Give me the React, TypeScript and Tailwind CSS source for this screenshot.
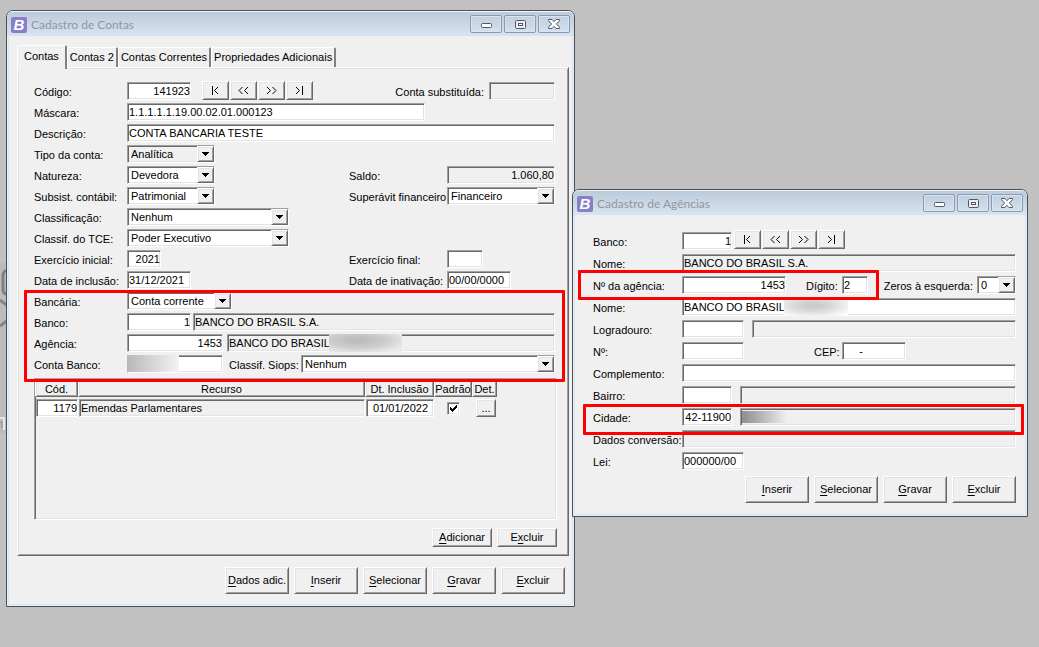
import { useState } from "react";
import type { ReactNode } from "react";
import clsx from "clsx";

const sunken =
  "border border-t-[#a0a0a0] border-l-[#a0a0a0] border-b-white border-r-white shadow-[inset_1px_1px_0_#696969,inset_-1px_-1px_0_#e3e3e3]";
const raised =
  "border border-t-white border-l-white border-b-[#696969] border-r-[#696969] shadow-[inset_1px_1px_0_#e3e3e3,inset_-1px_-1px_0_#a0a0a0]";

type LabelProps = { htmlFor?: string; className?: string; children: ReactNode };

function Label({ htmlFor, className, children }: LabelProps) {
  return (
    <label htmlFor={htmlFor} className={clsx("shrink-0 whitespace-nowrap pt-[3px] leading-[15px]", className)}>
      {children}
    </label>
  );
}

type FieldProps = {
  id?: string;
  label?: string;
  value?: string;
  readOnly?: boolean;
  right?: boolean;
  className?: string;
};

function Field({ id, label, value = "", readOnly, right, className }: FieldProps) {
  const [text, setText] = useState(value);
  return (
    <input
      id={id}
      aria-label={label}
      type="text"
      value={text}
      readOnly={readOnly}
      onChange={(e) => setText(e.target.value)}
      className={clsx(
        "block h-[18px] min-w-0 pb-[1px] pl-[1px] leading-[15px] outline-none",
        sunken,
        readOnly ? "bg-[#f0f0f0]" : "bg-white",
        right && "text-right",
        className,
      )}
    />
  );
}

type ComboProps = { id: string; options: string[]; gray?: boolean; className?: string };

function Combo({ id, options, gray, className }: ComboProps) {
  return (
    <div className={clsx("relative h-[18px] shrink-0 p-[1px]", sunken, gray ? "bg-[#f0f0f0]" : "bg-white", className)}>
      <select id={id} className="block h-[14px] w-full appearance-none bg-transparent pl-[2px] leading-[13px] outline-none">
        {options.map((o) => (
          <option key={o}>{o}</option>
        ))}
      </select>
      <span
        className={clsx(
          "pointer-events-none absolute inset-y-0 right-0 flex w-[17px] items-center justify-center bg-[#f0f0f0]",
          raised,
        )}
      >
        <svg width="7" height="4" viewBox="0 0 7 4" shapeRendering="crispEdges">
          <path d="M0 0h7v1H0zM1 1h5v1H1zM2 2h3v1H2zM3 3h1v1H3z" fill="#000" />
        </svg>
      </span>
    </div>
  );
}

// First letter (or the one at index `mark`) is the keyboard mnemonic
function Button({ text, mark = 0, small }: { text: string; mark?: number; small?: boolean }) {
  return (
    <button
      type="button"
      className={clsx(
        "shrink-0 whitespace-nowrap bg-[#f0f0f0] leading-[15px]",
        raised,
        small ? "h-[19px] w-[60px]" : "h-[27px] w-16",
      )}
    >
      {text.slice(0, mark)}
      <span className="underline underline-offset-2">{text[mark]}</span>
      {text.slice(mark + 1)}
    </button>
  );
}

const navItems = [
  { name: "Primeiro", d: "M2.5 0v9M8 1L4.5 4.5 8 8" },
  { name: "Anterior", d: "M4.5 1L1 4.5 4.5 8M10 1L6.5 4.5 10 8" },
  { name: "Próximo", d: "M1 1l3.5 3.5L1 8M6.5 1L10 4.5 6.5 8" },
  { name: "Último", d: "M2 1l3.5 3.5L2 8M8.5 0v9" },
];

function NavButtons({ className }: { className?: string }) {
  return (
    <div className={clsx("flex shrink-0 gap-[1px]", className)}>
      {navItems.map((n) => (
        <button
          key={n.name}
          type="button"
          aria-label={n.name}
          className={clsx("flex h-[19px] w-[27px] items-center justify-center bg-[#f0f0f0] pb-[1px]", raised)}
        >
          <svg width="11" height="9" viewBox="0 0 11 9" fill="none" stroke="#000">
            <path d={n.d} />
          </svg>
        </button>
      ))}
    </div>
  );
}

function Highlight({ className }: { className: string }) {
  return <div className={clsx("pointer-events-none absolute z-10 rounded-[1px] border-3 border-[#ff0000]", className)} />;
}

function Redacted({ className }: { className: string }) {
  return <span className={clsx("pointer-events-none absolute", className)} />;
}

function CaptionButtons() {
  const box =
    "flex h-[18px] w-8 items-center justify-center rounded-[2px] border border-[#8a99b5] shadow-[inset_0_0_0_1px_#dbe5f1]";
  return (
    <div className="flex gap-[2px]">
      <button type="button" aria-label="Minimizar" className={clsx(box, "pt-[3px]")}>
        <svg width="11" height="5" viewBox="0 0 11 5">
          <rect x=".5" y=".5" width="10" height="4" rx="1" fill="#fff" stroke="#535666" />
        </svg>
      </button>
      <button type="button" aria-label="Maximizar" className={box}>
        <svg width="11" height="9" viewBox="0 0 11 9">
          <rect x=".5" y=".5" width="10" height="8" rx="1" fill="#e9edf2" stroke="#535666" />
          <rect x="3.5" y="3.5" width="4" height="2" fill="#fff" stroke="#535666" />
        </svg>
      </button>
      <button type="button" aria-label="Fechar" className={box}>
        <svg width="12" height="10" viewBox="0 0 12 10">
          <path
            d="M.5.5h3.500L6 2.700 8 .5h3.500v1.200L8.400 5l3.100 3.300v1.200H8L6 7.300 4 9.500H.5V8.300L3.600 5 .5 1.700z"
            fill="#fff"
            stroke="#535666"
          />
        </svg>
      </button>
    </div>
  );
}

type WindowProps = { title: string; className: string; children: ReactNode };

function Window({ title, className, children }: WindowProps) {
  return (
    <section
      className={clsx(
        "absolute max-w-full rounded-t-[7px] border border-[#4c4e52] bg-[#f0f0f0] shadow-[inset_0_0_0_1px_#e6eef7,inset_0_0_0_2px_#d6e6f5]",
        className,
      )}
    >
      <header className="flex h-[25px] items-start justify-between rounded-t-[6px] border-t border-white/70 bg-linear-to-b from-[#bccbda] to-[#d8e4f2] pt-[3px] pr-1 pl-1">
        <div className="flex items-center gap-1 pt-[1px]">
          <span
            aria-hidden="true"
            className="flex h-4 w-4 items-center justify-center rounded-[2px] bg-[#8780c8] text-[15px] leading-4 font-bold text-white italic"
          >
            B
          </span>
          <h1 className="font-[Lato,sans-serif] text-[12px] leading-[17px] text-[#91969e]">{title}</h1>
        </div>
        <CaptionButtons />
      </header>
      {children}
    </section>
  );
}

const tabs = ["Contas", "Contas 2", "Contas Correntes", "Propriedades Adicionais"];

function Tabs() {
  const [active, setActive] = useState(0);
  return (
    <div role="tablist" className="relative flex items-end">
      {tabs.map((t, i) => (
        <button
          key={t}
          type="button"
          role="tab"
          aria-selected={active === i}
          onClick={() => setActive(i)}
          className={clsx(
            "rounded-t-[2px] border-t border-r-2 border-l border-t-white border-r-[#808080] border-l-white bg-[#f0f0f0] whitespace-nowrap",
            active === i ? "-mb-[2px] h-6 px-[6px] pb-[3px]" : "h-5 px-[2px]",
          )}
        >
          {t}
        </button>
      ))}
    </div>
  );
}

function ResourceTable() {
  const head = clsx("h-[17px] p-0 text-center font-normal", raised);
  return (
    <div className={clsx("mt-[5px] h-[142px] pt-[1px]", sunken)}>
      <table className="w-[462px] table-fixed border-separate border-spacing-0 leading-[14px]">
        <colgroup>
          <col className="w-[43px]" />
          <col />
          <col className="w-[69px]" />
          <col className="w-[38px]" />
          <col className="w-[25px]" />
        </colgroup>
        <thead>
          <tr>
            <th className={head}>Cód.</th>
            <th className={head}>Recurso</th>
            <th className={head}>Dt. Inclusão</th>
            <th className={clsx(head, "whitespace-nowrap")}>Padrão</th>
            <th className={head}>Det.</th>
          </tr>
        </thead>
        <tbody>
          <tr>
            <td className="p-0 pt-[2px] pl-[1px]">
              <Field label="Código do recurso" value="1179" right className="w-full" />
            </td>
            <td className="p-0 pt-[2px] pl-[1px]">
              <Field label="Recurso" value="Emendas Parlamentares" readOnly className="w-full" />
            </td>
            <td className="p-0 pt-[2px] pl-[1px]">
              <Field label="Data de inclusão do recurso" value="01/01/2022" className="w-full text-center" />
            </td>
            <td className="p-0 pt-[2px]">
              <div className="relative mx-auto h-[13px] w-[13px]">
                <input
                  type="checkbox"
                  aria-label="Padrão"
                  defaultChecked
                  className={clsx("peer block h-full w-full appearance-none bg-white", sunken)}
                />
                <svg
                  className="pointer-events-none invisible absolute top-[3px] left-[3px] peer-checked:visible"
                  width="7"
                  height="7"
                  viewBox="0 0 7 7"
                  shapeRendering="crispEdges"
                >
                  <path d="M0 2h1v1h1v1h1V3h1V2h1V1h1V0h1v3H6v1H5v1H4v1H3v1H2V6H1V5H0z" />
                </svg>
              </div>
            </td>
            <td className="p-0 pt-[2px] pl-1">
              <button type="button" aria-label="Detalhes" className={clsx("block h-[18px] w-5 leading-[14px]", raised)}>
                ...
              </button>
            </td>
          </tr>
        </tbody>
      </table>
    </div>
  );
}

const row = "flex h-[18px] items-end";

function AccountsWindow() {
  return (
    <Window title="Cadastro de Contas" className="top-[10px] left-[6px] w-[569px]">
      <div className="pt-[9px] pr-[9px] pb-3 pl-[10px]">
        <Tabs />
        <div className={clsx("mr-[-4px] pt-[14px] pr-[11px] pb-2 pl-4", raised)}>
          <div className="mr-[2px] flex flex-col gap-[3px]">
            <div className={row}>
              <Label htmlFor="codigo" className="w-[93px]">Código:</Label>
              <Field id="codigo" value="141923" right className="w-16" />
              <NavButtons className="ml-[11px]" />
              <Label htmlFor="substituida" className="ml-auto">Conta substituída:</Label>
              <Field id="substituida" readOnly className="ml-[5px] w-[66px]" />
            </div>
            <div className={row}>
              <Label htmlFor="mascara" className="w-[93px]">Máscara:</Label>
              <Field id="mascara" value="1.1.1.1.1.19.00.02.01.000123" className="w-[298px]" />
            </div>
            <div className={row}>
              <Label htmlFor="descricao" className="w-[93px]">Descrição:</Label>
              <Field id="descricao" value="CONTA BANCARIA TESTE" className="flex-1" />
            </div>
            <div className={row}>
              <Label htmlFor="tipo" className="w-[93px]">Tipo da conta:</Label>
              <Combo id="tipo" options={["Analítica"]} gray className="w-[88px]" />
            </div>
            <div className={row}>
              <Label htmlFor="natureza" className="w-[93px]">Natureza:</Label>
              <Combo id="natureza" options={["Devedora"]} className="w-[88px]" />
              <Label htmlFor="saldo" className="ml-auto w-[98px]">Saldo:</Label>
              <Field id="saldo" value="1.060,80" readOnly right className="w-[108px]" />
            </div>
            <div className={row}>
              <Label htmlFor="subsist" className="w-[93px]">Subsist. contábil:</Label>
              <Combo id="subsist" options={["Patrimonial"]} className="w-[88px]" />
              <Label htmlFor="superavit" className="ml-auto w-[98px]">Superávit financeiro:</Label>
              <Combo id="superavit" options={["Financeiro"]} className="w-[108px]" />
            </div>
            <div className={row}>
              <Label htmlFor="classificacao" className="w-[93px]">Classificação:</Label>
              <Combo id="classificacao" options={["Nenhum"]} className="w-[162px]" />
            </div>
            <div className={row}>
              <Label htmlFor="tce" className="w-[93px]">Classif. do TCE:</Label>
              <Combo id="tce" options={["Poder Executivo"]} className="w-[162px]" />
            </div>
            <div className={row}>
              <Label htmlFor="inicial" className="w-[93px]">Exercício inicial:</Label>
              <Field id="inicial" value="2021" right className="w-[34px]" />
              <Label htmlFor="final" className="ml-auto w-[98px]">Exercício final:</Label>
              <Field id="final" className="mr-[72px] w-9" />
            </div>
            <div className={row}>
              <Label htmlFor="inclusao" className="w-[93px]">Data de inclusão:</Label>
              <Field id="inclusao" value="31/12/2021" className="w-16" />
              <Label htmlFor="inativacao" className="ml-auto w-[98px]">Data de inativação:</Label>
              <Field id="inativacao" value="00/00/0000" className="mr-[44px] w-16" />
            </div>
            <div className="relative flex flex-col gap-[3px]">
              <div className={row}>
                <Label htmlFor="bancaria" className="w-[93px]">Bancária:</Label>
                <Combo id="bancaria" options={["Conta corrente"]} className="w-[105px]" />
              </div>
              <div className={row}>
                <Label htmlFor="banco" className="w-[93px]">Banco:</Label>
                <Field id="banco" value="1" right className="w-16" />
                <Field label="Nome do banco" value="BANCO DO BRASIL S.A." readOnly className="ml-[2px] flex-1" />
              </div>
              <div className={row}>
                <Label htmlFor="agencia" className="w-[93px]">Agência:</Label>
                <Field id="agencia" value="1453" right className="w-24" />
                <div className="relative ml-1 flex-1">
                  <Field label="Nome da agência" value="BANCO DO BRASIL" readOnly className="w-full" />
                  <Redacted className="inset-y-0 left-[102px] w-[73px] bg-[radial-gradient(ellipse_at_40%_35%,#bcbcbc_10%,#cdcdcd_45%,#ececec_85%)]" />
                </div>
              </div>
              <div className={row}>
                <Label htmlFor="contabanco" className="w-[93px]">Conta Banco:</Label>
                <div className="relative w-24">
                  <Field id="contabanco" className="w-full" />
                  <Redacted className="top-0 bottom-[1px] left-0 w-[52px] bg-linear-to-r from-[#b8b8b8] via-[#d6d6d6] to-[#f3f3f3]" />
                </div>
                <Label htmlFor="siops" className="ml-[6px] w-[72px]">Classif. Siops:</Label>
                <Combo id="siops" options={["Nenhum"]} className="flex-1" />
              </div>
              <Highlight className="-top-[2px] -right-[10px] -bottom-[9px] -left-[10px]" />
            </div>
          </div>
          <ResourceTable />
          <div className="mt-2 flex justify-end gap-[5px]">
            <Button text="Adicionar" small />
            <Button text="Excluir" mark={1} small />
          </div>
        </div>
        <div className="mt-[11px] flex justify-end gap-[5px]">
          <Button text="Dados adic." />
          <Button text="Inserir" />
          <Button text="Selecionar" />
          <Button text="Gravar" />
          <Button text="Excluir" />
        </div>
      </div>
    </Window>
  );
}

function AgenciesWindow() {
  return (
    <Window title="Cadastro de Agências" className="top-[189px] left-[572px] w-[456px]">
      <div className="flex flex-col gap-1 pt-[17px] pr-[11px] pb-[13px] pl-5">
        <div className={row}>
          <Label htmlFor="ag-banco" className="w-[89px]">Banco:</Label>
          <Field id="ag-banco" value="1" right className="w-[50px]" />
          <NavButtons className="mb-[1px] ml-[2px]" />
        </div>
        <div className={row}>
          <Label htmlFor="ag-nomebanco" className="w-[89px]">Nome:</Label>
          <Field id="ag-nomebanco" value="BANCO DO BRASIL S.A." readOnly className="flex-1" />
        </div>
        <div className={clsx(row, "justify-between")}>
          <div className="relative flex items-end">
            <Label htmlFor="ag-numero" className="w-[89px]">Nº da agência:</Label>
            <Field id="ag-numero" value="1453" right className="w-[104px]" />
            <Label htmlFor="ag-digito" className="ml-5 w-9">Dígito:</Label>
            <Field id="ag-digito" value="2" className="w-[26px]" />
            <Highlight className="-top-[6px] -right-[11px] -bottom-[6px] -left-[15px]" />
          </div>
          <div className="flex items-end gap-1">
            <Label htmlFor="ag-zeros">Zeros à esquerda:</Label>
            <Combo id="ag-zeros" options={["0"]} className="w-[39px]" />
          </div>
        </div>
        <div className={row}>
          <Label htmlFor="ag-nome" className="w-[89px]">Nome:</Label>
          <div className="relative flex-1">
            <Field id="ag-nome" value="BANCO DO BRASIL" className="w-full" />
            <Redacted className="inset-y-0 left-[102px] w-[64px] bg-[radial-gradient(ellipse_at_45%_40%,#cccccc_15%,#dedede_45%,#fbfbfb_85%)]" />
          </div>
        </div>
        <div className={row}>
          <Label htmlFor="ag-logradouro" className="w-[89px]">Logradouro:</Label>
          <Field id="ag-logradouro" className="w-[62px]" />
          <Field label="Nome do logradouro" readOnly className="ml-2 flex-1" />
        </div>
        <div className={row}>
          <Label htmlFor="ag-num" className="w-[89px]">Nº:</Label>
          <Field id="ag-num" className="w-[62px]" />
          <Label htmlFor="ag-cep" className="ml-[70px] w-7">CEP:</Label>
          <Field id="ag-cep" value="     -" className="w-16 whitespace-pre" />
        </div>
        <div className={row}>
          <Label htmlFor="ag-complemento" className="w-[89px]">Complemento:</Label>
          <Field id="ag-complemento" className="flex-1" />
        </div>
        <div className={row}>
          <Label htmlFor="ag-bairro" className="w-[89px]">Bairro:</Label>
          <Field id="ag-bairro" className="w-[50px]" />
          <Field label="Nome do bairro" readOnly className="ml-2 flex-1" />
        </div>
        <div className={clsx(row, "relative")}>
          <Label htmlFor="ag-cidade" className="w-[89px]">Cidade:</Label>
          <Field id="ag-cidade" value="42-11900" right className="w-[50px]" />
          <div className="relative ml-2 flex-1">
            <Field label="Nome da cidade" readOnly className="w-full" />
            <Redacted className="inset-y-[3px] left-[2px] w-[45px] bg-linear-to-r from-[#8f8f8f] via-[#bcbcbc] to-[#f0f0f0]" />
          </div>
          <Highlight className="-top-1 -right-2 -bottom-[9px] -left-[10px]" />
        </div>
        <div className={row}>
          <Label htmlFor="ag-conversao" className="w-[89px]">Dados conversão:</Label>
          <Field id="ag-conversao" readOnly className="flex-1" />
        </div>
        <div className={row}>
          <Label htmlFor="ag-lei" className="w-[89px]">Lei:</Label>
          <Field id="ag-lei" value="000000/00" className="w-[62px]" />
        </div>
        <div className="mt-[2px] flex justify-end gap-[5px]">
          <Button text="Inserir" />
          <Button text="Selecionar" />
          <Button text="Gravar" />
          <Button text="Excluir" />
        </div>
      </div>
    </Window>
  );
}

// Edge of the desktop artwork that shows beside the accounts window
function DesktopArt() {
  return (
    <svg className="absolute top-[262px] left-0" width="8" height="172" viewBox="0 0 8 172" fill="none" aria-hidden="true">
      <path d="M0 0h8v172H0z" fill="#bcbcbc" />
      <path d="M8 9H5Q3 10 3 14v14q0 4 5 4" stroke="#808080" strokeWidth="3" />
      <path d="M0 38l8 6M0 64l8-6" stroke="#858585" strokeWidth="3" />
      <path d="M0 156h4v12" stroke="#e6e6e6" strokeWidth="2" />
      <path d="M0 160h2v6" stroke="#8c8c8c" />
    </svg>
  );
}

export default function App() {
  return (
    <main className="relative min-h-screen overflow-hidden bg-[#c1c1c1] font-['Liberation_Sans',Arial,sans-serif] text-[11px] text-black">
      <DesktopArt />
      <AccountsWindow />
      <AgenciesWindow />
    </main>
  );
}
